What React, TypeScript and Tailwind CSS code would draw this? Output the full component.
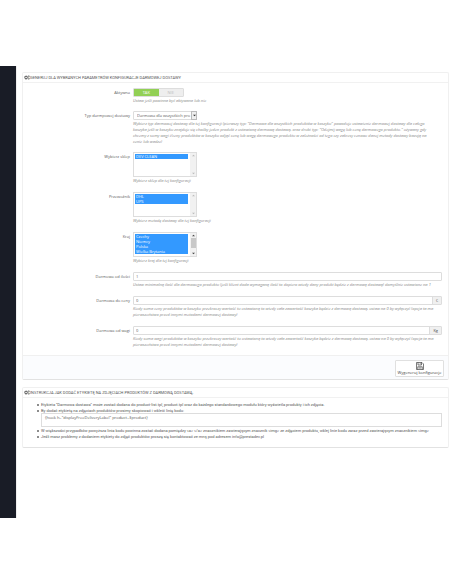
import type { ReactNode } from "react";
import clsx from "clsx";

function CogsIcon() {
  return (
    <svg viewBox="0 0 20 16" className="h-[5px] w-[6px] shrink-0" fill="none" stroke="#555" aria-hidden="true">
      <circle cx="7" cy="8" r="4" strokeWidth="3" />
      <circle cx="7" cy="8" r="6" strokeWidth="2" strokeDasharray="2.4 2.4" />
      <circle cx="16" cy="4" r="2" strokeWidth="2" />
      <circle cx="16" cy="12" r="2" strokeWidth="2" />
    </svg>
  );
}

function SaveIcon() {
  return (
    <svg viewBox="0 0 16 16" className="size-2" fill="none" stroke="#444" strokeWidth="1.4" aria-hidden="true">
      <path d="M1 1h11l3 3v11H1z" />
      <path d="M4 1v5h7V1M3.5 15V9.5h9V15" />
      <path d="M8.5 2.5v2M5.5 12h5" />
    </svg>
  );
}

function Panel({ title, children }: { title: string; children: ReactNode }) {
  return (
    <section className="rounded-xs border border-[#f0f0f0] border-b-[#e2e2e2] bg-white">
      <h2 className="flex h-[10px] items-center border-b border-[#f1f1f1] px-px font-['Roboto',sans-serif] text-[4px] leading-[6px] text-[#555] uppercase">
        <CogsIcon />
        <span className="whitespace-nowrap">{title}</span>
      </h2>
      {children}
    </section>
  );
}

function Row({ label, id, help, children }: { label: string; id?: string; help: string[]; children: ReactNode }) {
  return (
    <div className="flex gap-[3px]">
      <label htmlFor={id} className="w-[106px] shrink-0 pt-[2px] text-right">
        {label}
      </label>
      <div className="min-w-0 flex-1">
        {children}
        <p className="pt-px whitespace-nowrap text-[#888] italic">
          {help.map((line) => (
            <span key={line} className="block">
              {line}
            </span>
          ))}
        </p>
      </div>
    </div>
  );
}

function MultiSelect({ id, options, scroll }: { id: string; options: string[]; scroll?: boolean }) {
  return (
    <div className="flex h-[25px] w-[64px] border border-[#ddd] bg-white">
      <select
        id={id}
        multiple
        defaultValue={options}
        className="h-full min-w-0 flex-1 appearance-none overflow-hidden px-px pt-px outline-none"
      >
        {options.map((option) => (
          <option
            key={option}
            className="h-[5px] min-h-0 p-0 pl-px leading-[5px] text-white checked:bg-[#3399ff] checked:bg-[linear-gradient(#3399ff,#3399ff)]"
          >
            {option}
          </option>
        ))}
      </select>
      <div
        className={clsx(
          "ml-px flex w-[6px] flex-col items-center justify-between bg-[#f1f1f1] py-px",
          scroll ? "text-[#444]" : "text-[#bbb]",
        )}
        aria-hidden="true"
      >
        <svg viewBox="0 0 4 4" className="size-[3px]" fill="currentColor"><path d="M0 3l2-2 2 2z" /></svg>
        {scroll && <span className="mb-1 h-[10px] w-[5px] bg-[#c8c8c8]" />}
        <svg viewBox="0 0 4 4" className="size-[3px]" fill="currentColor"><path d="M0 1l2 2 2-2z" /></svg>
      </div>
    </div>
  );
}

function TextField({ id, value, unit }: { id: string; value: string; unit?: string }) {
  return (
    <div className="flex h-[9px] rounded-[1px] border border-[#ddd]">
      <input id={id} defaultValue={value} className="min-w-0 flex-1 px-[2px] outline-none" />
      {unit && (
        <span className="flex items-center border-l border-[#ddd] bg-[#f0f0f0] px-[3px] text-[#444]">{unit}</span>
      )}
    </div>
  );
}

const bullet =
  "relative before:absolute before:top-[2px] before:-left-1 before:size-[2px] before:rounded-full before:bg-[#666]";

export default function App() {
  return (
    <div className="bg-white pt-[66px] pb-[66px] font-['Open_Sans',sans-serif] text-[4px] leading-[6px] text-[#5a5a5a]">
      <div className="flex">
        <aside className="min-h-[452px] w-4 shrink-0 bg-[#191c26]" />
        <main className="flex min-w-0 flex-1 flex-col gap-[7px] border-l border-[#eee] pt-[6px] pr-[3px] pl-[5px]">
          <Panel title="Generuj dla wybranych parametrów konfiguracje darmowej dostawy">
            <form>
              <div className="flex flex-col pt-[5px] pr-[6px] pb-[7px] pl-px">
                <div className="mb-[7px]">
                  <Row label="Aktywna" help={["Ustaw jeśli powinna być aktywana lub nie"]}>
                    <div className="flex h-[9px] w-[51px] overflow-hidden rounded-[1px] border border-[#ddd] text-center leading-[7px]">
                      <label className="flex-1 bg-[#92d055] text-white">
                        <input type="radio" name="active" defaultChecked className="sr-only" />
                        TAK
                      </label>
                      <label className="flex-1 bg-[#eee] text-[#bbb]">
                        <input type="radio" name="active" className="sr-only" />
                        NIE
                      </label>
                    </div>
                  </Row>
                </div>
                <div className="mb-[7px]">
                  <Row
                    id="type"
                    label="Typ darmpowej dostawy"
                    help={[
                      "Wybierz typ darmowej dostawy dla tej konfiguracji (pierwszy typ: \"Darmowa dla wszystkich produktów w koszyku\" powoduje ustawienie darmowej dostawy dla całego",
                      "koszyka jeśli w koszyku znajduje się choćby jeden produkt z ustawioną darmową dostawą, oraz drubi typ: \"Odejmij wagę lub cenę darmowego produktu.\" używany gdy",
                      "chcemy z sumy wagi i/ceny produktów w koszyku odjąć cenę lub wagę darmowego produktu w zależności od tego czy zakresy cenowe danej metody dostawy bazują na",
                      "cenie lub wadze)",
                    ]}
                  >
                    <div className="relative w-[64px]">
                      <select id="type" className="block h-[9px] w-full appearance-none rounded-[1px] border border-[#ddd] bg-white pl-[3px] outline-none">
                        <option>Darmowa dla wszystkich pro</option>
                      </select>
                      <span className="pointer-events-none absolute inset-y-0 right-0 flex w-[6px] items-center justify-center border border-[#bbb] bg-[#eee]">
                        <svg viewBox="0 0 4 4" className="size-[3px]" fill="#333"><path d="M0 1l2 2 2-2z" /></svg>
                      </span>
                    </div>
                  </Row>
                </div>
                <div className="flex flex-col gap-2">
                  <Row id="shop" label="Wybierz sklep" help={["Wybierz sklep dla tej konfiguracji"]}>
                    <MultiSelect id="shop" options={["DEV CLEAN"]} />
                  </Row>
                  <Row id="carrier" label="Przewoźnik" help={["Wybierz metodę dostawy dla tej konfiguracji"]}>
                    <MultiSelect id="carrier" options={["DHL", "UPS"]} />
                  </Row>
                  <Row id="country" label="Kraj" help={["Wybierz kraj dla tej konfiguracji"]}>
                    <MultiSelect id="country" options={["Czechy", "Niemcy", "Polska", "Wielka Brytania"]} scroll />
                  </Row>
                  <Row
                    id="quantity"
                    label="Darmowa od ilości"
                    help={["Ustaw minimalną ilość dla darmowego produktu (jeśli klient doda wymaganą ilość to dopiero wtedy dany produkt będzie z darmową dostawą) domyślnie ustawione na 1"]}
                  >
                    <TextField id="quantity" value="1" />
                  </Row>
                  <Row
                    id="price"
                    label="Darmowa do ceny"
                    help={[
                      "Kiedy suma ceny produktów w koszyku przekroczy wartość tu ustawioną to wtedy cała zawartość koszyka będzie z darmową dostawą, ustaw na 0 by wyłączyć (opcja ta ma",
                      "pierwszeństwo przed innymi metodami darmowej dostawy)",
                    ]}
                  >
                    <TextField id="price" value="0" unit="€" />
                  </Row>
                  <Row
                    id="weight"
                    label="Darmowa od wagi"
                    help={[
                      "Kiedy suma wagi produktów w koszyku przekroczy wartość tu ustawioną to wtedy cała zawartość koszyka będzie z darmową dostawą, ustaw na 0 by wyłączyć (opcja ta ma",
                      "pierwszeństwo przed innymi metodami darmowej dostawy)",
                    ]}
                  >
                    <TextField id="weight" value="0" unit="Kg" />
                  </Row>
                </div>
              </div>
              <footer className="flex justify-end border-t border-[#f0f0f0] bg-[#fbfcfe] pt-1 pr-1 pb-[2px]">
                <button type="button" className="flex h-[17px] w-[49px] flex-col items-center justify-center rounded-[1px] border border-[#e0e0e0] bg-white whitespace-nowrap text-[#444]">
                  <SaveIcon />
                  <span>Wygeneruj konfiguracje</span>
                </button>
              </footer>
            </form>
          </Panel>

          <Panel title="Instrukcja jak dodać etykietę na zdjęciach produktów z darmową dostawą.">
            <ul className="flex flex-col gap-px pt-1 pr-[6px] pb-2 pl-[18px] font-['Roboto',sans-serif] leading-[5px] whitespace-nowrap text-[#555]">
              <li className={bullet}>Etykieta "Darmowa dostawa" może zostać dodana do product-list.tpl, product.tpl oraz do każdego standardowego modułu który wyświetla produkty i ich zdjęcia.</li>
              <li className={bullet}>
                By dodać etykietę na zdjęciach produktów prosimy skopiować i wkleić linię kodu:
                <textarea
                  aria-label="Kod etykiety"
                  readOnly
                  defaultValue={'{hook h="displayFreeDeliveryLabel" product=$product}'}
                  className="block h-[14px] w-full resize-none border border-[#ddd] px-[3px] py-px font-['Open_Sans',sans-serif] outline-none"
                />
              </li>
              <li className={bullet}>W większości przypadków powyższa linia kodu powinna zostać dodana pomiędzy {"<a> </a>"} znacznikiem zawierającym znacznik {"<img>"} ze zdjęciem produktu, wklej linie kodu zaraz przed zawierającym znacznikiem {"<img>"}</li>
              <li className={bullet}>Jeśli masz problemy z dodaniem etykiety do zdjęć produktów proszę się kontaktować ze mną pod adresem info@prestadev.pl</li>
            </ul>
          </Panel>
        </main>
      </div>
    </div>
  );
}
